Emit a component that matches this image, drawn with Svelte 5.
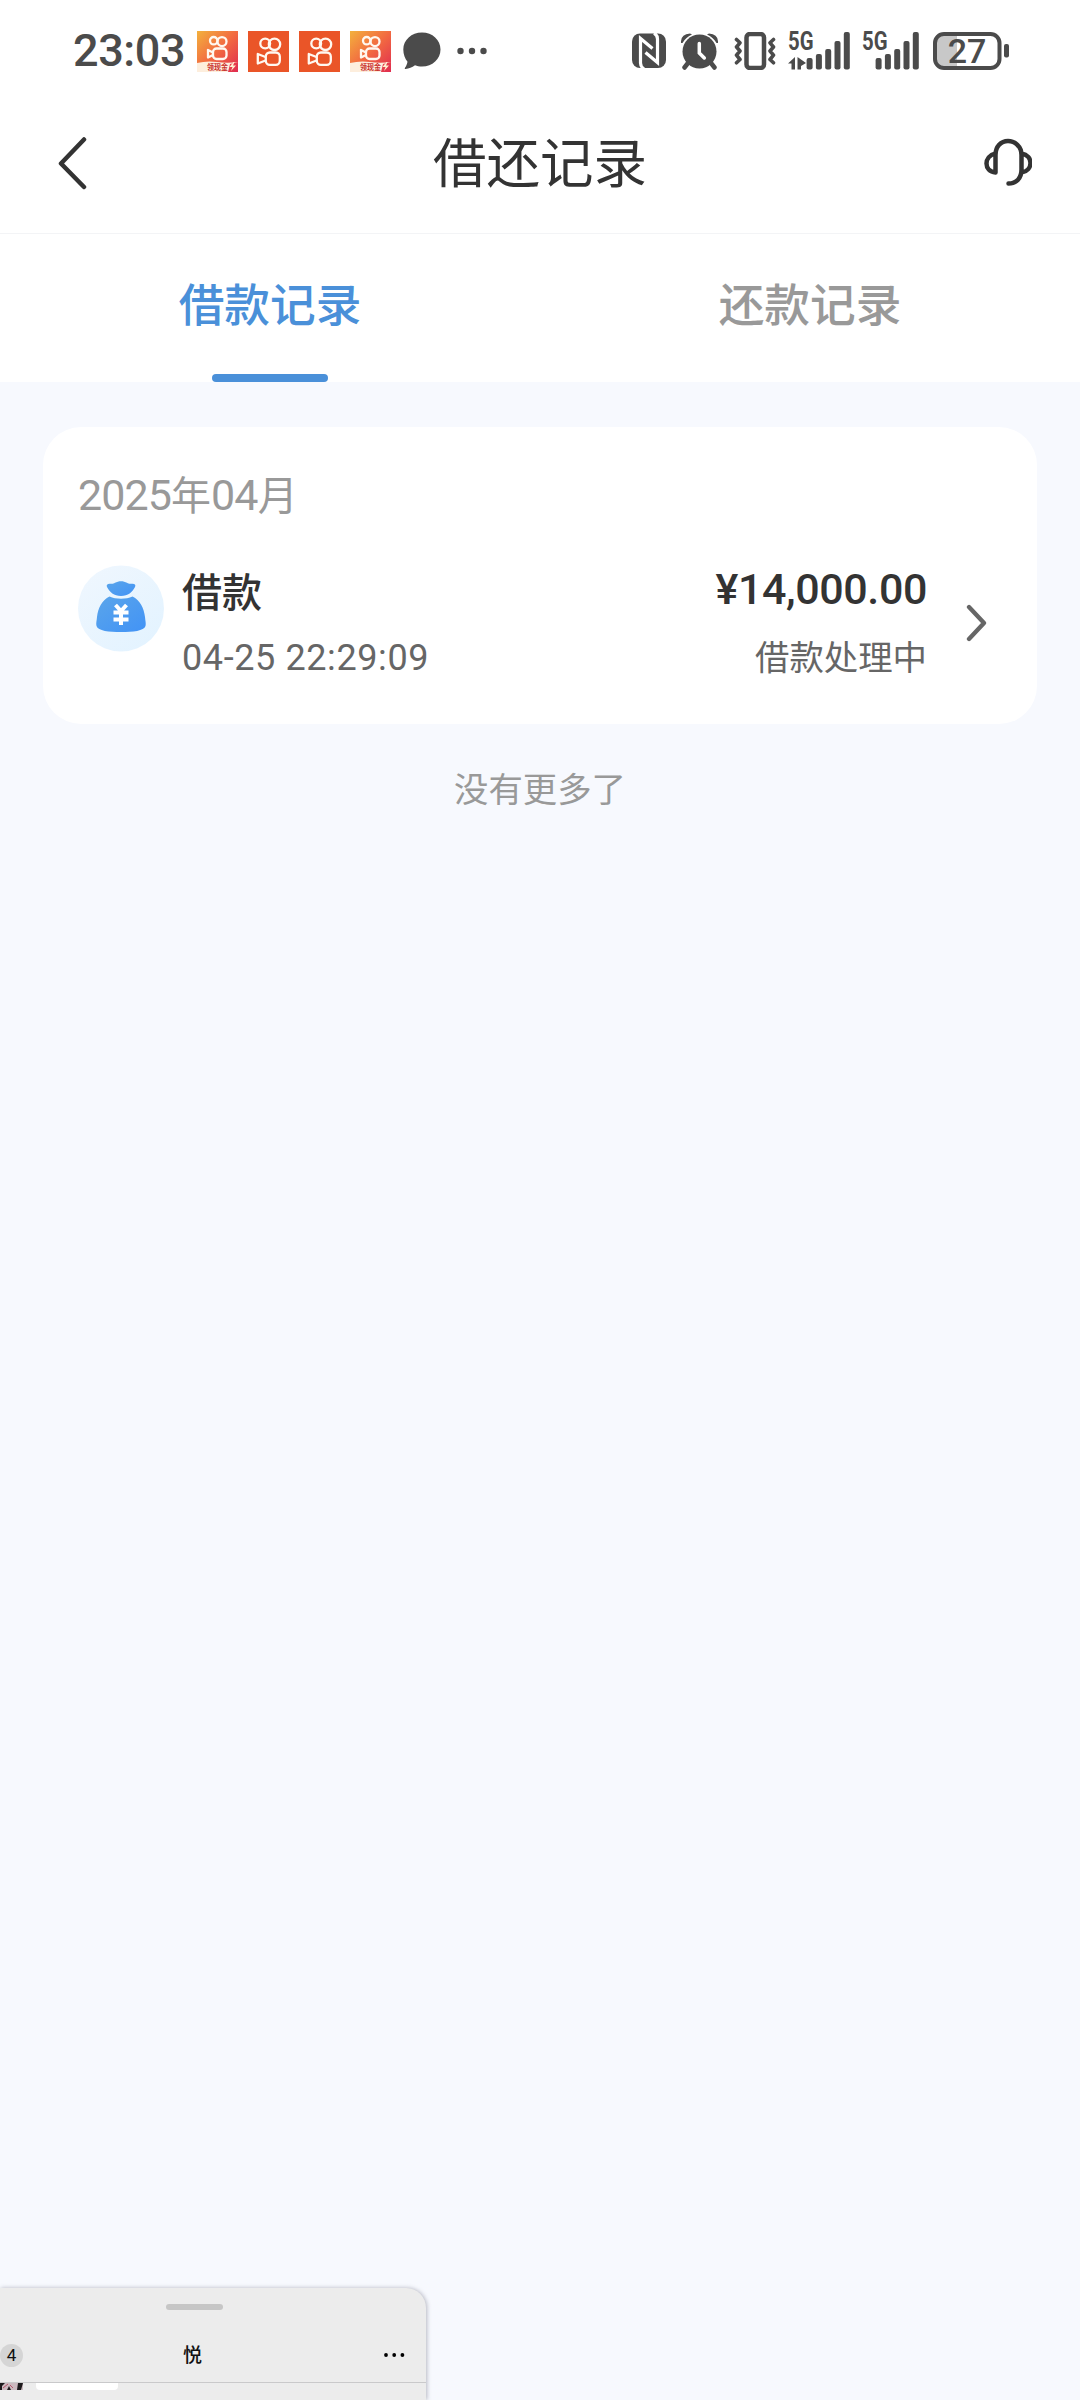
<script lang="ts">
  const tabs = [
    { id: 'borrow', label: '借款记录' },
    { id: 'repay', label: '还款记录' },
  ];

  const records = [
    { type: '借款', time: '04-25 22:29:09', amount: '¥14,000.00', status: '借款处理中' },
  ];

  // notification icons in the order they arrived, true = promo artwork
  const notifications = [true, false, false, true];

  // x offset and top of each signal bar
  const bars = [
    [0, 26],
    [9.3, 22],
    [18.6, 17],
    [27.9, 9],
    [37.2, 0],
  ];

  let active = $state('borrow');
</script>

{#snippet signal(width: number, data: boolean)}
  <svg class="signal" {width} height="38" viewBox="0 0 {width} 38">
    <text class="net" x="0" y="18" textLength="25.500" lengthAdjust="spacingAndGlyphs">5G</text>
    {#if data}
      <path d="M0 31.500 7 25v12.500H3.500v-6zM9.500 25v12.500h3.500v-3.500L18 31z" />
    {/if}
    {#each bars as [x, top]}
      <rect x={width - 43.4 + x} y={top} width="6" height={37.5 - top} rx="2" />
    {/each}
  </svg>
{/snippet}

<div class="screen">
  <div class="status">
    <span class="clock">23:03</span>
    <div class="notices">
      {#each notifications as promo}
        <svg width="41" height="41" viewBox="0 0 41 41">
          {#if promo}
            <defs>
              <linearGradient id="promo" x1="0" y1="0" x2="1" y2="1">
                <stop offset="0" stop-color="#f3b13d" />
                <stop offset="0.5" stop-color="#f26a41" />
                <stop offset="1" stop-color="#e02c50" />
              </linearGradient>
            </defs>
            <rect width="41" height="41" fill="url(#promo)" />
            <g class="camera">
              <circle cx="16.7" cy="9.7" r="3.7" />
              <circle cx="25" cy="10.6" r="4.5" />
              <rect x="16" y="17.5" width="13.5" height="10.5" rx="3.5" />
              <path d="M16 21.5l-5-2.6v7.6l5-2.6" />
            </g>
            <path d="M0 32Q10 29.5 20 31T41 31L33 33 31 41H0z" fill="#fdeedd" />
            <text class="promo-text" x="10" y="39" textLength="21" lengthAdjust="spacingAndGlyphs">领现金</text>
            <path d="M36.5 31l-4 5h3l-1.5 4 5-5.5h-3l1.5-3.5z" fill="#fff0d0" />
          {:else}
            <rect width="41" height="41" fill="#ea5528" />
            <g class="camera">
              <circle cx="17.2" cy="12.5" r="4.9" />
              <circle cx="26.5" cy="13.3" r="5.7" />
              <rect x="17.8" y="21.5" width="14" height="12.3" rx="4" />
              <path d="M17.5 26l-7.7-3v9.5l7.7-3" />
            </g>
          {/if}
        </svg>
      {/each}
    </div>
    <svg class="bubble" width="38" height="38" viewBox="0 0 38 38">
      <path d="M19 .5C29.5.5 37.5 8 37.5 17.5S29.5 34.500 19 34.500c-2.600 0-5-.4-7-1.200C9 35.500 6 36.800 2.500 37c-.8 0-1-.7-.5-1.300 1.300-1.700 2-3.700 2.500-6C2 26.500.3 22.500.3 17.500.3 8 8.500.5 19 .5z" />
    </svg>
    <svg width="30" height="8" viewBox="0 0 30 8">
      <circle cx="3.5" cy="4" r="3.2" />
      <circle cx="15" cy="4" r="3.2" />
      <circle cx="26.5" cy="4" r="3.2" />
    </svg>

    <div class="system">
      <svg width="34" height="36" viewBox="0 0 34 36">
        <rect y="0.5" width="34" height="34.5" rx="8" />
        <path class="cut" d="M12 36Q8.5 34 8.5 30V5.5L20.500 15.500M22 0q3.500 2 3.500 6v23.500L13.500 19.500" />
      </svg>
      <svg class="alarm" width="37" height="37" viewBox="0 0 37 37">
        <circle cx="18.5" cy="18.5" r="17" />
        <path d="M0 10Q-.5 1 9 .5l2 1Q5 4 1.5 10zM37 10Q37.500 1 28 .5l-2 1q6 2.500 9.500 8.500z" />
        <path class="leg" d="M7 30l-3.500 4.500M30 30l3.500 4.500" />
        <path class="hand" d="M18.3 10.500v9.500l5 5" />
      </svg>
      <svg class="vibrate" width="42" height="38" viewBox="0 0 42 38">
        <rect x="12.5" y="2" width="17.5" height="34" rx="3.5" />
        <path d="M2.5 7.500 6 10.800 2.500 15 6 19l-3.500 4.200L6 27.500l-3.500 3.300M39.500 7.500 36 10.800l3.500 4.200L36 19l3.500 4.200L36 27.500l3.500 3.300" />
      </svg>
      {@render signal(62, true)}
      {@render signal(57, false)}
      <svg class="battery" width="77" height="38" viewBox="0 0 77 38">
        <path d="M11 2h14v34H11Q3 36 3 26V12Q3 2 11 2z" fill="#c8c8c8" />
        <rect class="shell" x="3" y="2" width="64.5" height="34" rx="9" />
        <rect x="72" y="12" width="5" height="13.5" rx="2" />
        <text class="level" x="35" y="30.7" text-anchor="middle">27</text>
      </svg>
    </div>
  </div>

  <header class="nav">
    <button class="icon-btn" aria-label="返回">
      <svg class="line" width="32" height="54" viewBox="0 0 32 54">
        <path d="M28 3.5 5 27.5 28 51" />
      </svg>
    </button>
    <h1>借还记录</h1>
    <button class="icon-btn" aria-label="客服">
      <svg class="line" width="48" height="50" viewBox="0 0 48 50">
        <path d="M11.5 34.5V17C11.5 8.5 17 3 24 3s13.500 5.500 13.500 14v14.500C37.500 40 32.500 45.500 24.500 45.500M11.500 15.500C-.5 18-.5 33.500 11.500 34.500M37.500 15.500c12 2 12 17 0 19" />
      </svg>
    </button>
  </header>

  <nav class="tabs">
    {#each tabs as tab}
      <button class="tab" class:active={tab.id === active} onclick={() => (active = tab.id)}>
        <span>{tab.label}</span>
      </button>
    {/each}
  </nav>

  <main>
    <section class="card">
      <p class="month"><b>2025</b>年<b>04</b>月</p>
      {#each records as record}
        <div class="record">
          <svg class="bag" width="86" height="87" viewBox="0 0 86 87">
            <defs>
              <linearGradient id="disc" x1="0" y1="0" x2="0.8" y2="1">
                <stop offset="0" stop-color="#f0f7fe" />
                <stop offset="1" stop-color="#e3f3ff" />
              </linearGradient>
              <linearGradient id="sack" x1="0" y1="0" x2="1" y2="1">
                <stop offset="0" stop-color="#5aa5ea" />
                <stop offset="1" stop-color="#4293f6" />
              </linearGradient>
            </defs>
            <circle cx="43" cy="43.5" r="43" fill="url(#disc)" />
            <path d="M29 22c-1-2 .5-3.500 3-3.300 2.500.3 3.500 0 5-.9 3.500-2.200 8.500-2.200 12 0 1.500.9 2.500 1.200 5 .9 3-.2 4 1.500 3 3.300-2.500 5-7 9-14 9s-11.500-4-14-9z" fill="url(#sack)" />
            <path d="M31.5 31.500c6.500 3 16.500 3 23 0C62 35 66 43 67 52c.3 4 1.200 6.500.5 9C66 66 55 67 43 67s-23-1-24.500-6c-.7-2.500.2-5 .5-9 1-9 5-17 12.500-20.500z" fill="url(#sack)" />
            <path class="yen" d="M37.5 40l5.500 6 5.500-6M35.500 47.500h15M35.500 54.500h15M43 47v13" />
          </svg>
          <div class="info">
            <span class="type">{record.type}</span>
            <span class="time">{record.time}</span>
          </div>
          <div class="sum">
            <span class="amount">{record.amount}</span>
            <span class="state">{record.status}</span>
          </div>
          <svg class="arrow" width="22" height="38" viewBox="0 0 22 38">
            <path d="M3 3l15 16L3 35" />
          </svg>
        </div>
      {/each}
    </section>
    <p class="end">没有更多了</p>
  </main>

  <!-- corner of the floating chat window peeking in from below -->
  <aside class="peek">
    <div class="handle"></div>
    <div class="peek-bar">
      <span class="count">4</span>
      <span class="peer">悦</span>
      <svg width="22" height="6" viewBox="0 0 22 6">
        <circle cx="3" cy="3" r="1.9" />
        <circle cx="11.2" cy="3" r="1.9" />
        <circle cx="19.4" cy="3" r="1.9" />
      </svg>
    </div>
    <div class="chat">
      <svg width="23" height="7" viewBox="0 0 23 7">
        <rect width="23" height="7" fill="#cbb9bf" />
        <path d="M0 0h5L2 3v4H0zM18 0h5l-2 7h-4zM7 7l2-4 2 4z" fill="#1c1a1c" />
        <path d="M3 5l5-4M10 2l3 3" stroke="#b5566c" />
      </svg>
      <span class="msg"></span>
    </div>
  </aside>
</div>

<style>
  :global(body) {
    background: #f7f9fe;
  }

  .screen {
    position: relative;
    width: 1080px;
    height: 2400px;
    overflow: hidden;
    background: #f7f9fe;
    font-family: Roboto, 'Noto Sans CJK SC', sans-serif;
    color: #333;
  }

  h1,
  p {
    margin: 0;
    font-weight: 400;
  }

  button {
    padding: 0;
    border: 0;
    background: none;
    font: inherit;
    color: inherit;
  }

  svg {
    display: block;
    flex: none;
  }

  /* system status bar */
  .status {
    display: flex;
    align-items: center;
    height: 102px;
    padding: 0 71px 0 73px;
    background: #fff;
    fill: #4b4b4b;
    color: #4b4b4b;
  }

  .clock {
    width: 124px;
    font-size: 45px;
    font-weight: 500;
    line-height: 62px;
    letter-spacing: -0.4px;
    white-space: nowrap;
  }

  .notices {
    display: flex;
    gap: 10px;
  }

  .camera {
    fill: none;
    stroke: #fff8f0;
    stroke-width: 2.3;
    stroke-linejoin: round;
  }

  .promo-text {
    font-size: 8px;
    font-weight: 700;
    fill: #c9302c;
  }

  .bubble {
    margin: 0 16px 0 12px;
  }

  .system {
    display: flex;
    align-items: center;
    margin-left: auto;
  }

  .cut {
    fill: none;
    stroke: #fff;
    stroke-width: 3.2;
  }

  .alarm {
    margin: 0 16px 0 15px;
  }

  .leg {
    stroke: #4b4b4b;
    stroke-width: 4.5;
    stroke-linecap: round;
  }

  .hand {
    fill: none;
    stroke: #fff;
    stroke-width: 3.5;
    stroke-linecap: round;
  }

  .vibrate {
    margin-right: 12px;
    fill: none;
    stroke: #4b4b4b;
    stroke-width: 4.5;
    stroke-linejoin: round;
  }

  .vibrate path {
    stroke-width: 3.6;
    stroke-linecap: round;
  }

  .signal {
    margin-right: 12px;
    overflow: visible;
  }

  .signal + .battery {
    margin-left: 1px;
  }

  .net {
    font-size: 25px;
    font-weight: 700;
  }

  .shell {
    fill: none;
    stroke: #4b4b4b;
    stroke-width: 4;
  }

  .level {
    font-size: 34px;
    font-weight: 500;
  }

  /* page header */
  .nav {
    display: flex;
    align-items: center;
    justify-content: space-between;
    height: 132px;
    padding: 0 48px 9px 56px;
    box-sizing: border-box;
    border-bottom: 1px solid #f3f4f6;
    background: #fff;
  }

  h1 {
    padding: 3px 0 0 8px;
    font-size: 53.5px;
    line-height: 80px;
  }

  .line {
    fill: none;
    stroke: #333;
    stroke-width: 4.5;
    stroke-linecap: round;
    stroke-linejoin: round;
  }

  .tabs {
    display: flex;
    height: 148px;
    background: #fff;
  }

  .tab {
    display: flex;
    flex: 1;
    flex-direction: column;
    align-items: center;
    justify-content: space-between;
    font-size: 45.7px;
    font-weight: 500;
    line-height: 70px;
    color: #999;
  }

  .tab span {
    margin-top: 38px;
  }

  .tab::after {
    content: '';
    width: 116px;
    height: 8px;
    border-radius: 4px;
  }

  .tab.active {
    color: #4a90d9;
  }

  .tab.active::after {
    background: #4a90d9;
  }

  main {
    padding: 45px 43px 0;
  }

  .card {
    height: 297px;
    padding: 39px 51px 0 35px;
    box-sizing: border-box;
    border-radius: 38px;
    background: #fff;
  }

  .month {
    height: 58px;
    font-size: 40px;
    line-height: 58px;
    color: #999;
  }

  .month b {
    font-size: 43px;
    font-weight: 400;
    letter-spacing: -0.9px;
  }

  .record {
    display: flex;
    margin-top: 33px;
  }

  .bag {
    margin: 8px 18px 0 0;
  }

  .yen {
    fill: none;
    stroke: #fff;
    stroke-width: 4;
    stroke-linejoin: round;
  }

  .info,
  .sum {
    display: flex;
    flex-direction: column;
  }

  .sum {
    align-items: flex-end;
    margin-left: auto;
  }

  .type,
  .amount {
    height: 66px;
    font-size: 40px;
    font-weight: 500;
    line-height: 73px;
  }

  .amount {
    font-size: 43px;
    line-height: 64px;
    letter-spacing: -0.4px;
  }

  .time,
  .state {
    font-size: 34.4px;
    line-height: 70px;
    color: #666;
  }

  .time {
    font-size: 36px;
    letter-spacing: 0.6px;
  }

  .arrow {
    margin: 47px -2px 0 39px;
    fill: none;
    stroke: #666;
    stroke-width: 4.3;
    stroke-linecap: round;
    stroke-linejoin: round;
  }

  .end {
    margin-top: 41px;
    font-size: 34.4px;
    line-height: 50px;
    text-align: center;
    color: #999;
  }

  .peek {
    position: absolute;
    left: 0;
    bottom: 0;
    width: 426px;
    height: 112px;
    border-radius: 0 20px 0 0;
    background: #ececec;
    box-shadow: 1px 0 4px rgba(60, 60, 80, 0.35);
  }

  .handle {
    width: 57px;
    height: 6px;
    margin: 0 0 0 166px;
    border-radius: 3px;
    background: #c6c6c6;
    transform: translateY(16px);
  }

  .peek-bar {
    display: flex;
    align-items: center;
    height: 89px;
    padding: 34px 21px 0 0;
    box-sizing: border-box;
    border-bottom: 1px solid #c9c9cb;
    color: #111;
  }

  .peek-bar svg {
    margin-left: auto;
  }

  .count {
    width: 23px;
    height: 23px;
    border-radius: 50%;
    background: #d5d5d5;
    font-size: 17px;
    line-height: 23px;
    text-align: center;
  }

  .peer {
    margin-left: 160px;
    font-size: 19px;
    font-weight: 500;
    line-height: 25px;
  }

  .chat {
    display: flex;
    gap: 13px;
  }

  .msg {
    width: 82px;
    height: 7px;
    border-radius: 0 0 4px 4px;
    background: #fff;
  }
</style>
